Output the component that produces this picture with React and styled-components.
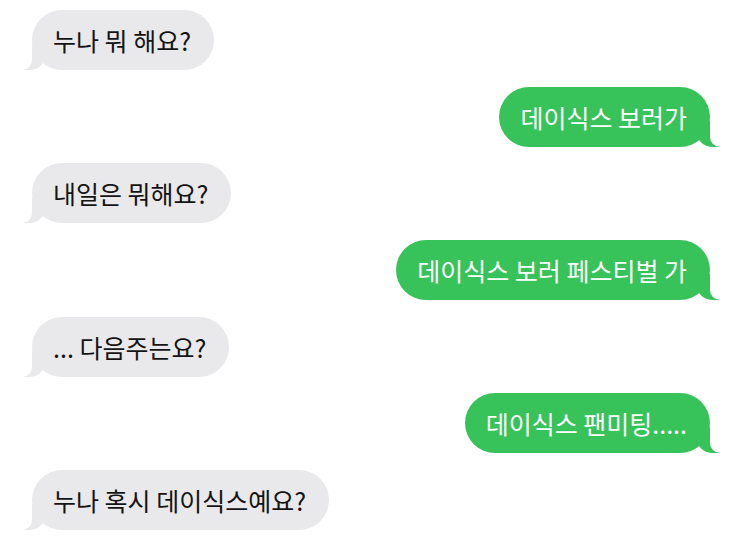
import React from 'react';
import styled, { createGlobalStyle } from 'styled-components';

const GlobalStyle = createGlobalStyle`
  html, body {
    margin: 0;
    padding: 0;
    background: #ffffff;
  }
  body {
    font-family: "Noto Sans CJK KR", "Noto Sans", sans-serif;
  }
`;

const Thread = styled.div`
  display: flex;
  flex-direction: column;
  gap: 16.7px;
  padding: 10px 33px 0 32px;
  width: 743px;
  box-sizing: border-box;
`;

const Bubble = styled.div`
  position: relative;
  align-self: ${(p) => (p.$mine ? 'flex-end' : 'flex-start')};
  height: 60px;
  box-sizing: border-box;
  padding: 0 23px 0 21px;
  line-height: 60px;
  border-radius: 30px;
  font-size: 25px;
  white-space: nowrap;
  background: ${(p) => (p.$mine ? '#37c25a' : '#e9e9eb')};
  color: ${(p) => (p.$mine ? '#ffffff' : '#141414')};

  /* tail */
  &::before {
    content: '';
    position: absolute;
    bottom: 0;
    height: 26px;
    width: 22px;
    background: ${(p) => (p.$mine ? '#37c25a' : '#e9e9eb')};
    ${(p) =>
      p.$mine
        ? 'right: -9px; border-bottom-left-radius: 16px 14px;'
        : 'left: -9px; border-bottom-right-radius: 16px 14px;'}
  }

  &::after {
    content: '';
    position: absolute;
    bottom: 0;
    height: 26px;
    width: 26px;
    background: #ffffff;
    ${(p) =>
      p.$mine
        ? 'right: -26px; border-bottom-left-radius: 10px;'
        : 'left: -26px; border-bottom-right-radius: 10px;'}
  }
`;

const messages = [
  { mine: false, text: '누나 뭐 해요?' },
  { mine: true, text: '데이식스 보러가' },
  { mine: false, text: '내일은 뭐해요?' },
  { mine: true, text: '데이식스 보러 페스티벌 가' },
  { mine: false, text: '... 다음주는요?' },
  { mine: true, text: '데이식스 팬미팅.....' },
  { mine: false, text: '누나 혹시 데이식스예요?' },
];

export default function App() {
  return (
    <>
      <GlobalStyle />
      <Thread>
        {messages.map((m, i) => (
          <Bubble key={i} $mine={m.mine}>
            {m.text}
          </Bubble>
        ))}
      </Thread>
    </>
  );
}
